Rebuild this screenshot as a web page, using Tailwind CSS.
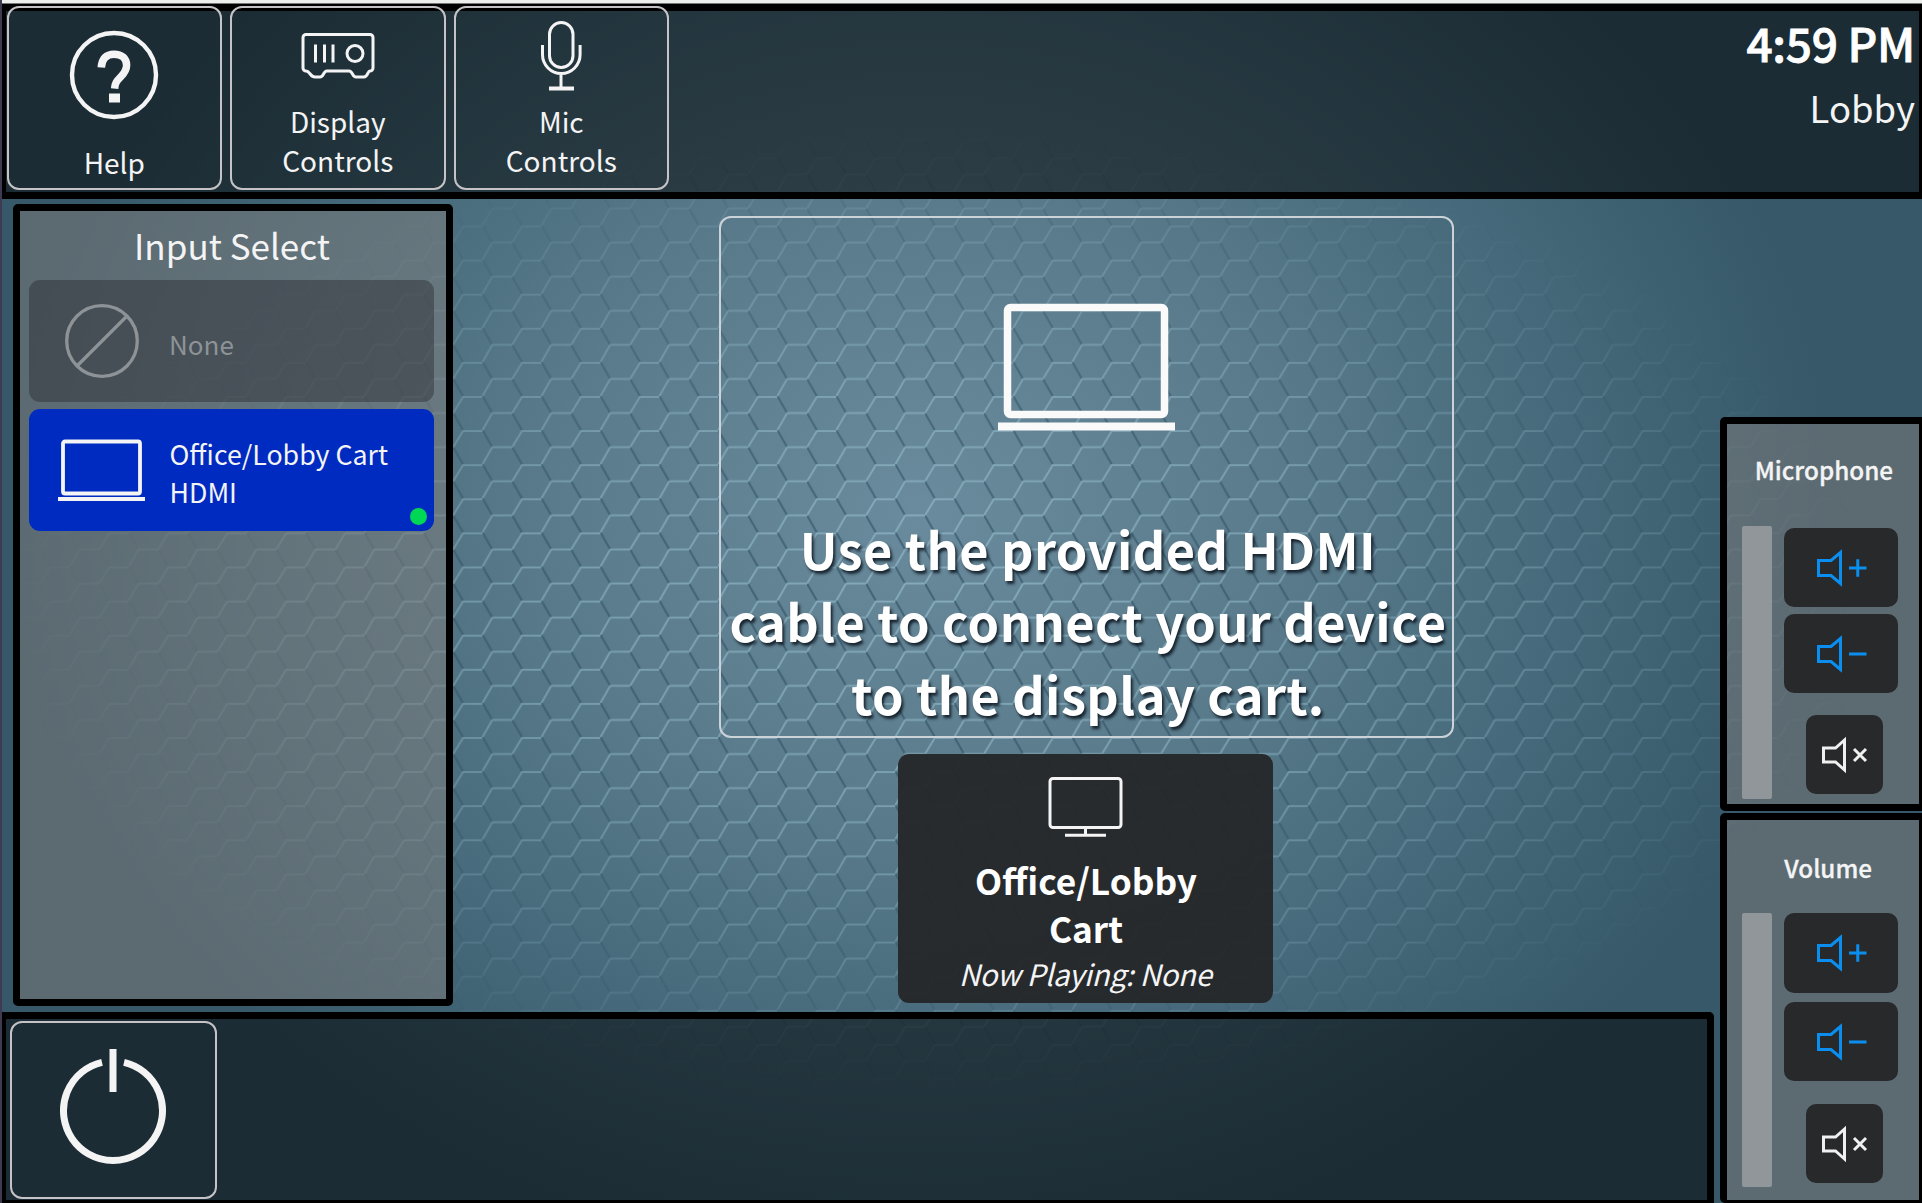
<!DOCTYPE html>
<html lang="en">
<head>
<meta charset="utf-8">
<title>Room Control</title>
<script src="https://cdn.jsdelivr.net/npm/@tailwindcss/browser@4"></script>
</head>
<body class="relative h-[1203px] w-[1922px] overflow-hidden bg-[#365869] font-['Noto_Sans_CJK_SC','Noto_Sans',sans-serif] text-[#f4f4f5]">
<!-- backdrop: radial glow with a honeycomb emboss -->
<svg class="absolute inset-0" width="1922" height="1203" viewBox="0 0 1922 1203" aria-hidden="true">
  <defs>
    <radialGradient id="glow" gradientUnits="userSpaceOnUse" cx="0" cy="0" r="1" gradientTransform="translate(920 510) scale(910 760)">
      <stop offset="0" stop-color="#6a8b9d"/><stop offset=".4" stop-color="#5a7b8b"/><stop offset=".7" stop-color="#476b7c"/><stop offset="1" stop-color="#365869"/>
    </radialGradient>
    <radialGradient id="fade" gradientUnits="userSpaceOnUse" cx="0" cy="0" r="1" gradientTransform="translate(940 610) scale(940 490)">
      <stop offset="0" stop-color="#fff"/><stop offset=".45" stop-color="#ccc"/><stop offset=".8" stop-color="#555"/><stop offset="1" stop-color="#000"/>
    </radialGradient>
    <pattern id="hex" patternUnits="userSpaceOnUse" x="512.2" y="532.4" width="58.97" height="34.1">
      <path d="M29.300 0l9.800 17.050M0 17.050l9.800 17.050" stroke="#1f4256" stroke-opacity=".5" stroke-width="2.200" fill="none"/>
      <path d="M0 17.050L9.800 1H29.300M29.300 34.100L39.100 17.050H59" stroke="#9cc4d4" stroke-opacity=".58" stroke-width="2" fill="none"/>
    </pattern>
    <mask id="m"><rect width="1922" height="1203" fill="url(#fade)"/></mask>
  </defs>
  <rect width="1922" height="1203" fill="url(#glow)"/>
  <rect width="1922" height="1203" fill="url(#hex)" mask="url(#m)"/>
</svg>

<div class="relative flex h-full flex-col border-l-2 border-[#3d3a52]">
  <div class="h-[4px] shrink-0 border-b border-[#777] bg-[#ecefec]"></div>
  <header class="relative flex h-[195px] shrink-0 justify-between bg-black/50">
    <div class="pointer-events-none absolute inset-0 border-y-[7px] border-l-4 border-r-[3px] border-black"></div>
    <nav class="relative ml-[4.500px] mt-[2px] flex gap-2 text-[28px] leading-[39px]">
      <button class="flex h-[184px] w-[215.500px] flex-col items-center rounded-[12px] border-2 border-[#c5c3c6]">
        <svg class="mt-[22px]" width="90" height="90" viewBox="0 0 90 90" fill="none" stroke="#f4f4f5"><circle cx="45" cy="45" r="42" stroke-width="4.400"/><path d="M32.300 37.500c.4-8.500 4.700-13.300 12.700-13.300 7.800 0 12.600 4.300 12.600 11 0 5.300-2.600 8.300-6 11.800-4 4-5.600 6.200-6 11.600" stroke-width="7.500"/><path d="M45.500 63.500v9" stroke-width="11"/></svg>
        <span class="mt-[23px]">Help</span>
      </button>
      <button class="flex h-[184px] w-[215.500px] flex-col items-center rounded-[12px] border-2 border-[#c5c3c6]">
        <svg class="mt-[23px]" width="74" height="50" viewBox="0 0 74 50" fill="none" stroke="#f4f4f5" stroke-width="3"><path d="M5 3.500H69a3 3 0 0 1 3 3V37a3 3 0 0 1-3 3c-2.500 0-2 6-6 6H55c-4 0-3-6-7-6H26c-4 0-3 6-7 6H14c-5 0-5-6-9-6a3 3 0 0 1-3-3V6.500a3 3 0 0 1 3-3z"/><path d="M14.500 13.500v18M23.500 13.500v18M32 13.500v18"/><circle cx="54" cy="22.500" r="8"/></svg>
        <span class="mt-[21px] text-center">Display<br>Controls</span>
      </button>
      <button class="flex h-[184px] w-[215.500px] flex-col items-center rounded-[12px] border-2 border-[#c5c3c6]">
        <svg class="mt-[13px]" width="42" height="70" viewBox="0 0 42 70" fill="none" stroke="#f4f4f5" stroke-width="3"><rect x="9.500" y="1.500" width="23.500" height="45" rx="11.750"/><path d="M2.500 24v9.500a18.800 19 0 0 0 37.600 0V24M21 52v15"/><path d="M9 67.500H34" stroke-width="4"/></svg>
        <span class="mt-[11px] text-center">Mic<br>Controls</span>
      </button>
    </nav>
    <div class="relative flex flex-col items-end pr-[7px] pt-[8px]">
      <div class="text-[46px] font-medium leading-[60px] tracking-[-0.3px] text-white [-webkit-text-stroke:0.8px_white]">4:59 PM</div>
      <div class="mt-[6px] text-[36.500px] leading-[60px]">Lobby</div>
    </div>
  </header>

  <div class="flex h-[1004px]">
    <div class="flex w-[1712px] flex-col">
      <main class="flex h-[813px]">
        <section class="ml-[11px] mt-[5px] h-[802px] w-[440px] rounded-[5px] border-[7px] border-black bg-[rgba(130,126,123,0.5)] px-[9px]">
          <h2 class="h-[69px] pr-[2px] text-center text-[35px] leading-[68px]">Input Select</h2>
          <button class="flex h-[122px] w-[405px] items-center rounded-[11px] bg-[#2a2b30]/45 pl-[35px] text-left text-[26px] leading-[38px] text-[#8d9396]">
            <svg width="76" height="76" viewBox="0 0 76 76" fill="none" stroke="#8d9396" stroke-width="3.300"><circle cx="38" cy="38" r="35.300"/><path d="M13 63L63 13"/></svg>
            <span class="ml-[29px] mt-[5px]">None</span>
          </button>
          <button class="relative mt-[7px] flex h-[122px] w-[405px] items-center rounded-[11px] bg-[#002bc0] pl-[29px] text-left text-[26.750px] leading-[38px]">
            <svg class="h-[63px] w-[87px]" viewBox="0 0 87 63" fill="none" stroke="currentColor" stroke-width="3.800"><rect x="5" y="2.500" width="77" height="52" rx="2"/><path d="M0 60H87"/></svg>
            <span class="ml-[24.500px] mt-[5px]">Office/Lobby Cart<br>HDMI</span>
            <i class="absolute bottom-[6px] right-[7px] size-[17px] rounded-full bg-[#00d755]"></i>
          </button>
        </section>
        <section class="ml-[266px] mt-[17px] flex w-[735px] flex-col items-center">
          <div class="flex h-[522px] w-full flex-col items-center rounded-[12px] border-2 border-[#cbd3d8]">
            <svg class="mt-[85px] h-[128px] w-[178px] text-[#fafafa]" viewBox="0 0 178 128"><rect x="9.500" y="4.500" width="157" height="107" rx="3" fill="none" stroke="currentColor" stroke-width="7.500"/><rect x="0" y="119.500" width="177" height="8" fill="currentColor"/></svg>
            <p class="ml-[3px] mt-[81px] whitespace-nowrap text-center text-[50.500px] font-bold leading-[72.300px] tracking-[0.450px] text-white [text-shadow:2px_3px_3px_rgba(10,20,30,0.85)]">Use the provided HDMI<br>cable to connect your device<br>to the display cart.</p>
          </div>
          <div class="mr-[3px] mt-[16px] flex h-[249px] w-[375px] flex-col items-center rounded-[11px] bg-[#26282a]/97">
            <svg class="mt-[21px]" width="76" height="62" viewBox="0 0 76 62" fill="none" stroke="#f4f4f5" stroke-width="3"><rect x="3" y="3.500" width="71" height="49" rx="3"/><path d="M38.500 52v7M18 60.300H59"/></svg>
            <p class="ml-[2px] mt-[19px] text-center text-[35.250px] font-bold leading-[48px] text-white">Office/Lobby<br>Cart</p>
            <p class="text-[29.500px] italic leading-[42px] tracking-[-0.400px]">Now Playing: None</p>
          </div>
        </section>
      </main>
      <footer class="relative h-[191px] rounded-tr-[5px] bg-black/50">
        <div class="absolute inset-0 rounded-tr-[5px] border-b-[3px] border-l-4 border-r-[7px] border-t-[7px] border-black"></div>
        <button class="relative ml-[7.500px] mt-[9px] flex h-[178px] w-[207px] justify-center rounded-[12px] border-2 border-[#c5c3c6]">
          <svg class="mt-[25px]" width="108" height="118" viewBox="0 0 108 118" fill="none" stroke="#f4f4f5" stroke-width="7"><path d="M43 14.300A49.500 49.700 0 1 0 65 14.300M54 1v43"/></svg>
        </button>
      </footer>
    </div>
    <aside class="ml-[6px] mt-[218px] flex w-[202px] flex-col gap-[2px]">
      <section class="h-[394px] rounded-l-[5px] border-y-[7px] border-l-[7px] border-r-[3px] border-black bg-[rgba(130,126,123,0.5)]">
        <h3 class="h-[102px] pr-[26px] pt-[28px] text-right text-[24.250px] font-medium leading-[36px] [-webkit-text-stroke:0.3px_currentColor]">Microphone</h3>
        <div class="flex gap-[12px] pl-[15px]">
          <div class="h-[273px] w-[30px] rounded-[2px] bg-[#909699]"></div>
          <div class="mt-[2px] flex w-[114px] flex-col items-center text-[#0a8ff0]">
            <button class="flex h-[79px] w-full items-center justify-center rounded-[10px] bg-[#28292b]"><svg width="52" height="40" viewBox="0 0 52 40" fill="none" stroke="currentColor" stroke-width="3"><path d="M3.500 12.500H16L25.500 4.500v31L16 27.500H3.500zM34 20H51.500M42.750 11.300V28.700"/></svg></button>
            <button class="mt-[7px] flex h-[79px] w-full items-center justify-center rounded-[10px] bg-[#28292b]"><svg width="52" height="40" viewBox="0 0 52 40" fill="none" stroke="currentColor" stroke-width="3"><path d="M3.500 12.500H16L25.500 4.500v31L16 27.500H3.500zM34 20H51.500"/></svg></button>
            <button class="ml-[7px] mt-[22px] flex h-[79px] w-[77px] items-center justify-center rounded-[10px] bg-[#28292b] text-[#f0f0f0]"><svg width="48" height="40" viewBox="0 0 48 40" fill="none" stroke="currentColor" stroke-width="3"><path d="M2.500 13H14.500L23.500 5v30L14.500 27H2.500zM33 14L45 26M45 14L33 26"/></svg></button>
          </div>
        </div>
      </section>
      <section class="h-[390px] rounded-l-[5px] border-b-[3px] border-l-[7px] border-r-[3px] border-t-[7px] border-black bg-[rgba(130,126,123,0.5)]">
        <h3 class="h-[93px] pr-[47px] pt-[30px] text-right text-[24.250px] font-medium leading-[36px] [-webkit-text-stroke:0.3px_currentColor]">Volume</h3>
        <div class="flex gap-[12px] pl-[15px]">
          <div class="h-[274px] w-[30px] rounded-[2px] bg-[#909699]"></div>
          <div class="flex w-[114px] flex-col items-center text-[#0a8ff0]">
            <button class="flex h-[80px] w-full items-center justify-center rounded-[10px] bg-[#28292b]"><svg width="52" height="40" viewBox="0 0 52 40" fill="none" stroke="currentColor" stroke-width="3"><path d="M3.500 12.500H16L25.500 4.500v31L16 27.500H3.500zM34 20H51.500M42.750 11.300V28.700"/></svg></button>
            <button class="mt-[9px] flex h-[79px] w-full items-center justify-center rounded-[10px] bg-[#28292b]"><svg width="52" height="40" viewBox="0 0 52 40" fill="none" stroke="currentColor" stroke-width="3"><path d="M3.500 12.500H16L25.500 4.500v31L16 27.500H3.500zM34 20H51.500"/></svg></button>
            <button class="ml-[7px] mt-[23px] flex h-[79px] w-[77px] items-center justify-center rounded-[10px] bg-[#28292b] text-[#f0f0f0]"><svg width="48" height="40" viewBox="0 0 48 40" fill="none" stroke="currentColor" stroke-width="3"><path d="M2.500 13H14.500L23.500 5v30L14.500 27H2.500zM33 14L45 26M45 14L33 26"/></svg></button>
          </div>
        </div>
      </section>
    </aside>
  </div>
</div>
</body>
</html>
